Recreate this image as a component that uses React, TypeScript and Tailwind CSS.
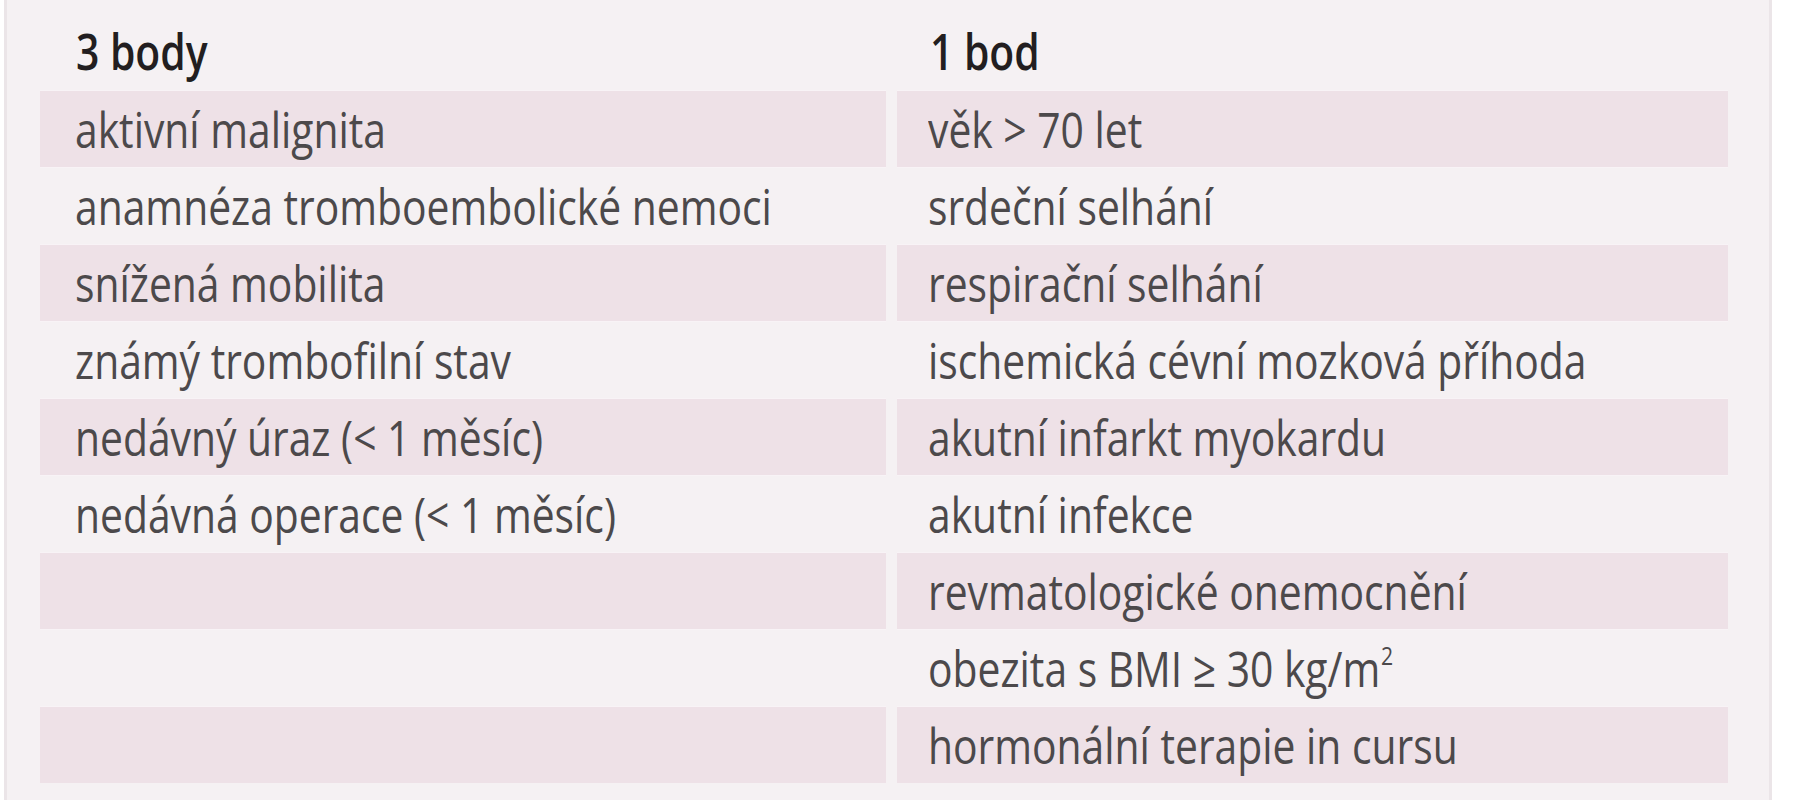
import React from "react";

type Row = { left: React.ReactNode; right: React.ReactNode };

const rows: Row[] = [
  { left: "aktivní malignita", right: "věk > 70 let" },
  { left: "anamnéza tromboembolické nemoci", right: "srdeční selhání" },
  { left: "snížená mobilita", right: "respirační selhání" },
  { left: "známý trombofilní stav", right: "ischemická cévní mozková příhoda" },
  { left: "nedávný úraz (< 1 měsíc)", right: "akutní infarkt myokardu" },
  { left: "nedávná operace (< 1 měsíc)", right: "akutní infekce" },
  { left: "", right: "revmatologické onemocnění" },
  {
    left: "",
    right: (
      <>
        obezita s BMI ≥ 30 kg/m
        <span className="inline-block align-top text-[26px] leading-[26px] mt-[12px] ml-[1px]">2</span>
      </>
    ),
  },
  { left: "", right: "hormonální terapie in cursu" },
];

function Txt({ children, bold }: { children: React.ReactNode; bold?: boolean }) {
  return (
    <span
      className={
        "inline-block origin-left scale-x-[0.816] whitespace-nowrap " +
        (bold ? "font-semibold text-[#221e20]" : "font-normal text-[#4c494b]")
      }
    >
      {children}
    </span>
  );
}

export default function App() {
  return (
    <div className="w-[1816px] h-[800px] bg-white font-['Open_Sans',sans-serif] overflow-hidden">
      <div className="ml-[4px] w-[1768px] h-[800px] bg-[#f5f1f3] border-x-[3px] border-[#ebe5e8] pl-[33px] pr-[41px]">
        <div className="grid grid-cols-[846px_831px] gap-x-[11px] text-[50px] leading-[77px]">
          <div className="h-[90px] pt-[13px] pl-[36px]">
            <Txt bold>3 body</Txt>
          </div>
          <div className="h-[90px] pt-[13px] pl-[33px]">
            <Txt bold>1 bod</Txt>
          </div>
          {rows.map((r, i) => {
            const shade = i % 2 === 0 ? "bg-[#eee1e7]" : "bg-[#f5f1f3]";
            return (
              <React.Fragment key={i}>
                <div className={"h-[77px] pl-[35px] border-t border-[#f8f3f6] " + shade}>
                  <Txt>{r.left}</Txt>
                </div>
                <div className={"h-[77px] pl-[31px] border-t border-[#f8f3f6] " + shade}>
                  <Txt>{r.right}</Txt>
                </div>
              </React.Fragment>
            );
          })}
        </div>
      </div>
    </div>
  );
}
